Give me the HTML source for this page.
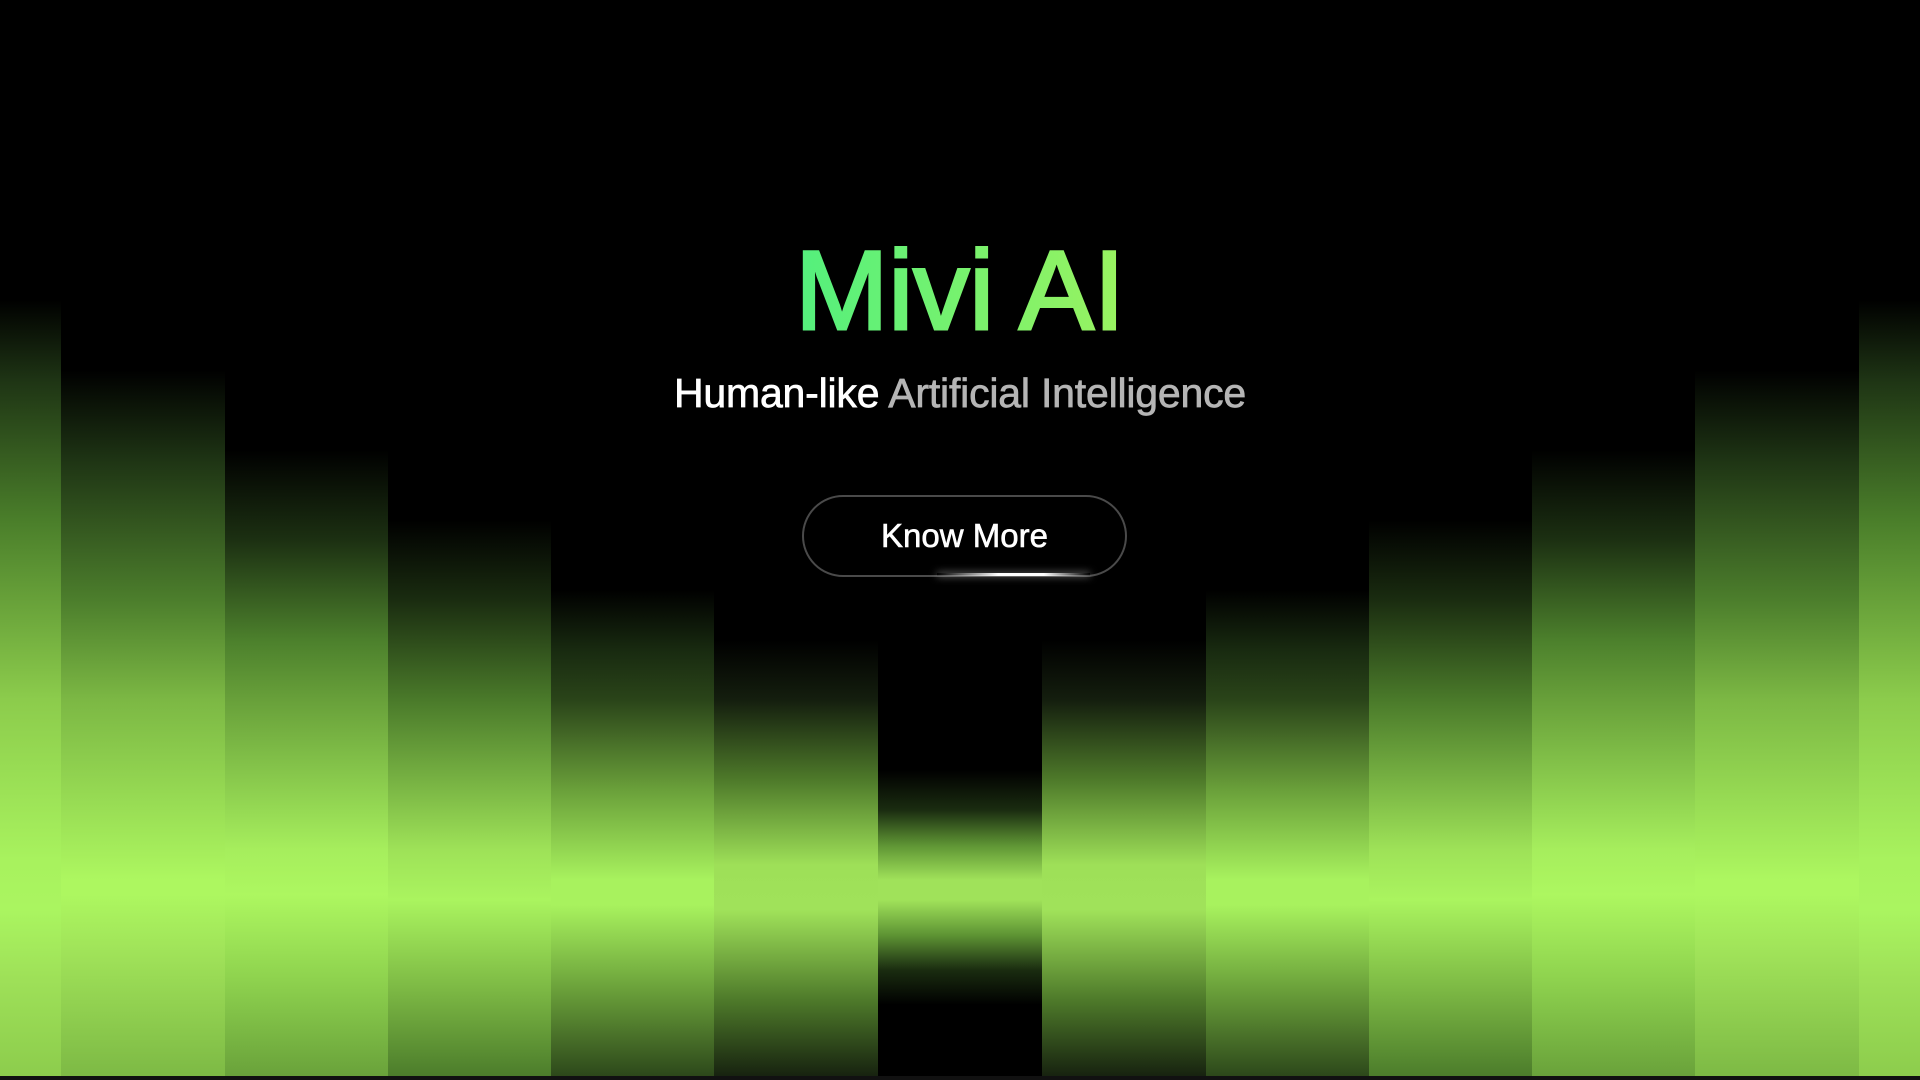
<!DOCTYPE html>
<html><head><meta charset="utf-8"><style>
html,body{margin:0;padding:0;background:#000;width:1920px;height:1080px;overflow:hidden;font-family:"Liberation Sans",sans-serif}
.col{position:absolute;top:0;height:1080px}
.d6{background:linear-gradient(#000 0,#000 300px,#1e3414 380px,#4a7e2a 520px,#8ccc4c 700px,#a8f25e 860px,#aaf560 910px,#9ee058 980px,#8ccc4c 1080px)}
.d5{background:linear-gradient(#000 0,#000 370px,#1e3414 460px,#4c7e2c 600px,#7cb844 700px,#adf760 880px,#adf760 895px,#9ee058 960px,#7cb844 1080px)}
.d4{background:linear-gradient(#000 0,#000 450px,#1c3012 540px,#4c802c 640px,#68a03a 700px,#a6ee5d 850px,#adf760 895px,#8ed24e 980px,#68a03a 1080px)}
.d3{background:linear-gradient(#000 0,#000 520px,#1a2c10 600px,#4a7a2a 700px,#9ee258 850px,#aaf45f 900px,#7cb844 990px,#4a7a2a 1080px)}
.d2{background:linear-gradient(#000 0,#000 590px,#182a10 650px,#2a4419 700px,#6aa03a 790px,#a8f25e 880px,#a8f25e 905px,#6aa03a 990px,#2a4419 1080px)}
.d1{background:linear-gradient(#000 0,#000 640px,#141e0e 700px,#4e7a2a 780px,#9ee058 865px,#a0e25a 910px,#4e7a2a 1000px,#141e0e 1080px)}
.d0{background:linear-gradient(#000 0,#000 770px,#1a2c10 810px,#5e9434 845px,#a0e25a 880px,#a0e25a 900px,#5e9434 935px,#1a2c10 970px,#000 1005px)}
.tw{position:absolute;left:790px;width:340px;top:226px;text-align:center}
.title{font-size:112px;line-height:130px;-webkit-text-stroke:3px transparent;
background:linear-gradient(90deg,#4ef07f 0,#9ff35e 100%);-webkit-background-clip:text;background-clip:text;color:transparent;white-space:nowrap;margin-left:-20px;margin-right:-20px}
.sub{position:absolute;left:0;width:1920px;top:368px;text-align:center;font-size:41px;line-height:50px;color:#fff;letter-spacing:-0.2px;-webkit-text-stroke:0.7px #fff}
.sub span{color:#b5b5b5;-webkit-text-stroke:0.7px #b5b5b5}
.btn{position:absolute;left:802px;top:495px;width:321px;height:78px;border:2px solid #4a4a4a;border-radius:41px;color:#fff;font-size:33px;line-height:78px;text-align:center;background:#000;-webkit-text-stroke:0.6px #fff}
.glow{position:absolute;left:937px;top:573px;width:153px;height:3px;background:linear-gradient(90deg,rgba(255,255,255,0),#fff 40%,#fff 70%,rgba(255,255,255,0));box-shadow:0 0 8px rgba(255,255,255,.6)}
.bl{position:absolute;left:0;top:1076px;width:1920px;height:4px;background:#111}
</style></head><body>
<div class="col d6" style="left:0;width:61px"></div>
<div class="col d5" style="left:61px;width:164px"></div>
<div class="col d4" style="left:225px;width:163px"></div>
<div class="col d3" style="left:388px;width:163px"></div>
<div class="col d2" style="left:551px;width:163px"></div>
<div class="col d1" style="left:714px;width:164px"></div>
<div class="col d0" style="left:878px;width:164px"></div>
<div class="col d1" style="left:1042px;width:164px"></div>
<div class="col d2" style="left:1206px;width:163px"></div>
<div class="col d3" style="left:1369px;width:163px"></div>
<div class="col d4" style="left:1532px;width:163px"></div>
<div class="col d5" style="left:1695px;width:164px"></div>
<div class="col d6" style="left:1859px;width:61px"></div>
<div class="tw"><div class="title">Mivi AI</div></div>
<div class="sub">Human-like <span>Artificial Intelligence</span></div>
<div class="btn">Know More</div>
<div class="glow"></div>
<div class="bl"></div>
</body></html>
